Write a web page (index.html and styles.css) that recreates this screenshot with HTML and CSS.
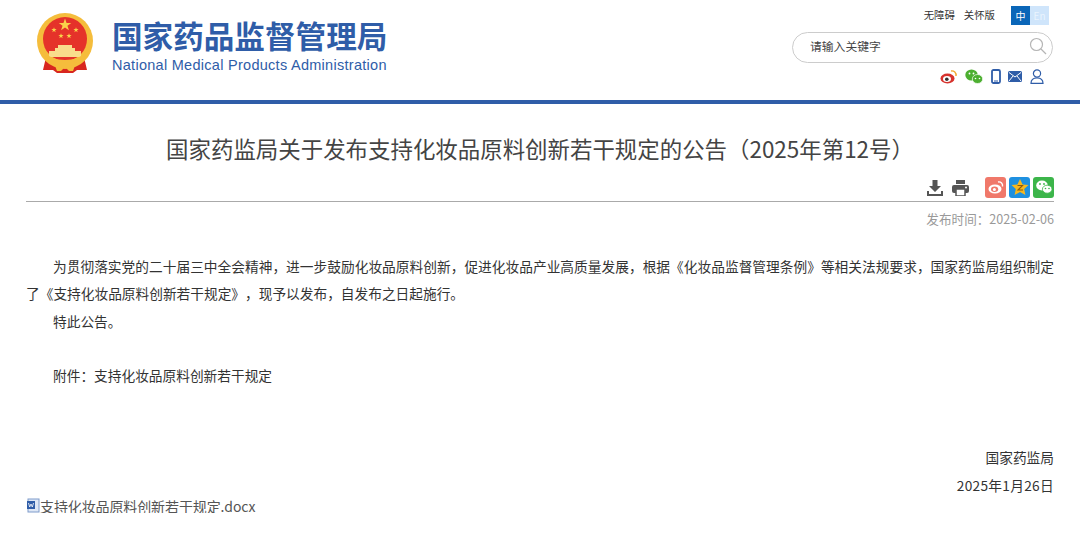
FILE: index.html
```html
<!DOCTYPE html>
<html lang="zh-CN">
<head>
  <meta charset="UTF-8" />
  <meta name="viewport" content="width=device-width, initial-scale=1.0"/>
  <title>国家药监局关于发布支持化妆品原料创新若干规定的公告（2025年第12号）</title>
  <link rel="stylesheet" href="styles.css">
</head>
<body>
  <header class="site-header">
    <div class="brand">
      <svg class="emblem" viewBox="0 0 56 60" width="56" height="60">
        <defs>
          <polygon id="star" points="0,-5 1.2,-1.6 4.8,-1.6 1.9,0.6 3,4 0,2 -3,4 -1.9,0.6 -4.8,-1.6 -1.2,-1.6"/>
        </defs>
        <path d="M10 40 L6 57 L16 57 L20 60 L36 60 L40 57 L50 57 L46 40 Z" fill="#d8261f"/>
        <circle cx="28" cy="28" r="28" fill="#f5bd3c"/>
        <circle cx="28" cy="26" r="22" fill="#e5322a"/>
        <use href="#star" transform="translate(28 12) scale(1.3)" fill="#f9d24a"/>
        <use href="#star" transform="translate(17 17) scale(.55)" fill="#f9d24a"/>
        <use href="#star" transform="translate(24 23) scale(.55)" fill="#f9d24a"/>
        <use href="#star" transform="translate(32 23) scale(.55)" fill="#f9d24a"/>
        <use href="#star" transform="translate(39 17) scale(.55)" fill="#f9d24a"/>
        <path d="M21 32 H35 V35 H38 V38 H44 V44 H12 V38 H18 V35 H21 Z" fill="#f9dc8c"/>
        <path d="M7 38 C14 50 42 50 49 38 L47 46 C40 53 16 53 9 46 Z" fill="#f5bd3c"/>
        <path d="M17 50 C22 46 34 46 39 50 L36 58 H32 L28 54 L24 58 H20 Z" fill="#f5bd3c"/>
      </svg>
      <div class="brand-text">
        <div class="brand-cn">国家药品监督管理局</div>
        <div class="brand-en">National Medical Products Administration</div>
      </div>
    </div>
    <div class="header-tools">
      <div class="top-links">
        <a>无障碍</a>
        <a>关怀版</a>
        <div class="lang">
          <span class="lang-cn">中</span><span class="lang-en">En</span>
        </div>
      </div>
      <div class="search">
        <span>请输入关键字</span>
        <svg viewBox="0 0 18 18" width="18" height="18" fill="none" stroke="#b5b5b5" stroke-width="1.2">
          <circle cx="7.5" cy="7.5" r="6"/><path d="M12 12 L17 17"/>
        </svg>
      </div>
      <div class="follow">
        <svg class="ico-weibo" viewBox="0 0 18 15" width="18" height="15">
          <ellipse cx="7.5" cy="9.5" rx="7" ry="5" fill="#d7322d"/>
          <ellipse cx="7" cy="10" rx="4" ry="3" fill="#fff"/>
          <circle cx="6.8" cy="10.2" r="1.8" fill="#333"/>
          <path d="M11 2 C14 1.5 16.5 3.5 16 7" fill="none" stroke="#f2a72e" stroke-width="1.4"/>
        </svg>
        <svg class="ico-wechat" viewBox="0 0 18 15" width="18" height="15">
          <ellipse cx="6.5" cy="6" rx="6.2" ry="5.5" fill="#4caf30"/>
          <ellipse cx="12.5" cy="10" rx="5.2" ry="4.5" fill="#4caf30" stroke="#fff" stroke-width=".7"/>
          <circle cx="4.5" cy="4.5" r=".9" fill="#fff"/>
          <circle cx="8.5" cy="4.5" r=".9" fill="#fff"/>
          <circle cx="10.5" cy="9.5" r=".8" fill="#fff"/>
          <circle cx="14.5" cy="9.5" r=".8" fill="#fff"/>
        </svg>
        <svg class="ico-phone" viewBox="0 0 10 15" width="10" height="15">
          <rect x="1" y="1" width="8" height="13" rx="1.5" fill="#fff" stroke="#2f5da8" stroke-width="1.8"/>
          <path d="M3 12 H7" stroke="#2f5da8"/>
        </svg>
        <svg class="ico-mail" viewBox="0 0 14 11" width="14" height="11">
          <rect width="14" height="11" rx="1.5" fill="#2f5da8"/>
          <path d="M1 1.5 L7 6 L13 1.5 M1 10 L5 5 M13 10 L9 5" fill="none" stroke="#fff"/>
        </svg>
        <svg class="ico-user" viewBox="0 0 14 15" width="14" height="15" fill="none" stroke="#2f5da8" stroke-width="1.2">
          <circle cx="7" cy="4.5" r="3.6"/>
          <path d="M1 14.3 C1 10.5 3.5 9 7 9 C10.5 9 13 10.5 13 14.3 Z"/>
        </svg>
      </div>
    </div>
  </header>

  <main class="article">
    <h1>国家药监局关于发布支持化妆品原料创新若干规定的公告（2025年第12号）</h1>

    <div class="toolbar">
      <svg class="tool-down" viewBox="0 0 16 16" width="16" height="16" fill="#555">
        <path d="M5.5 0 H10.5 V6 H14 L8 12 L2 6 H5.5 Z"/>
        <path d="M0 11 H2 V14 H14 V11 H16 V16 H0 Z"/>
      </svg>
      <svg class="tool-print" viewBox="0 0 17 16" width="17" height="16">
        <path d="M4 0 H13 V4 H4 Z" fill="#555"/>
        <rect y="5" width="17" height="8" rx="2" fill="#555"/>
        <rect x="4" y="9" width="9" height="7" fill="#fff" stroke="#555" stroke-width="1.5"/>
        <circle cx="14" cy="7.5" r="1" fill="#fff"/>
      </svg>
      <div class="share">
        <span class="share-btn share-weibo">
          <svg viewBox="0 0 20 20" width="20" height="20">
            <ellipse cx="9" cy="12" rx="6.5" ry="4.6" fill="#fff"/>
            <ellipse cx="8.6" cy="12.3" rx="3.6" ry="2.7" fill="#f0786a"/>
            <circle cx="8.4" cy="12.4" r="1.5" fill="#fff"/>
            <path d="M12 5 C15 4.5 17 6.5 16.5 9.5" fill="none" stroke="#fff" stroke-width="1.4"/>
          </svg>
        </span>
        <span class="share-btn share-qzone">
          <svg viewBox="0 0 20 20" width="20" height="20">
            <polygon points="10,2 12.6,7.4 18.5,8 14.2,12 15.4,18 10,15 4.6,18 5.8,12 1.5,8 7.4,7.4" fill="#f6b81f"/>
            <path d="M7.5 8.5 H12.5 L8 13 H13" fill="none" stroke="#8a5a10" stroke-width="1.1"/>
          </svg>
        </span>
        <span class="share-btn share-wechat">
          <svg viewBox="0 0 20 20" width="20" height="20">
            <ellipse cx="8" cy="8.5" rx="5.8" ry="5" fill="#fff"/>
            <ellipse cx="13.2" cy="12.2" rx="4.8" ry="4" fill="#fff" stroke="#3cb54a" stroke-width=".8"/>
            <circle cx="6" cy="7" r=".9" fill="#3cb54a"/>
            <circle cx="10" cy="7" r=".9" fill="#3cb54a"/>
            <circle cx="11.5" cy="11.5" r=".8" fill="#3cb54a"/>
            <circle cx="15" cy="11.5" r=".8" fill="#3cb54a"/>
          </svg>
        </span>
      </div>
    </div>

    <div class="publish-date">发布时间：2025-02-06</div>

    <div class="content">
      <p class="indent">为贯彻落实党的二十届三中全会精神，进一步鼓励化妆品原料创新，促进化妆品产业高质量发展，根据《化妆品监督管理条例》等相关法规要求，国家药监局组织制定了《支持化妆品原料创新若干规定》，现予以发布，自发布之日起施行。</p>
      <p class="indent">特此公告。</p>
      <p class="blank">&nbsp;</p>
      <p class="indent">附件：支持化妆品原料创新若干规定</p>
      <p class="blank">&nbsp;</p>
      <p class="blank">&nbsp;</p>
      <p class="sign">国家药监局</p>
      <p class="sign sign-date">2025年1月26日</p>
    </div>

    <div class="attachment">
      <svg viewBox="0 0 14 15" width="14" height="15">
        <rect x="2" y="1" width="11" height="13" fill="#dfe8f6" stroke="#7f9ccb"/>
        <rect x="1" y="3" width="8" height="8" fill="#2f5da8"/>
        <path d="M2.5 5 L3.7 9 L5 6 L6.3 9 L7.5 5" fill="none" stroke="#fff" stroke-width=".8"/>
      </svg>
      <a>支持化妆品原料创新若干规定.docx</a>
    </div>
  </main>
</body>
</html>
```

FILE: styles.css
```css
body {
  margin: 0;
  background: #fff;
  color: #333;
  font-family: "Noto Sans CJK SC", "Noto Sans", sans-serif;
  overflow: hidden;
}

.site-header {
  display: flex;
  justify-content: space-between;
  height: 100px;
  padding: 0 27px 0 37px;
  border-bottom: 4px solid #2f5da8;
}

.brand {
  display: flex;
  gap: 19px;
  padding-top: 13px;
}

.emblem {
  display: block;
}

.brand-cn {
  margin-top: 4px;
  font-size: 30.6px;
  line-height: 36px;
  font-weight: 700;
  color: #2f5da8;
  white-space: nowrap;
}

.brand-en {
  margin-top: 3px;
  font-family: "Liberation Sans", sans-serif;
  font-size: 14.5px;
  line-height: 18px;
  letter-spacing: 0.28px;
  color: #2f5da8;
  white-space: nowrap;
}

.header-tools {
  display: flex;
  flex-direction: column;
  align-items: flex-end;
  width: 261px;
}

.top-links {
  display: flex;
  align-items: center;
  height: 19px;
  margin-top: 6px;
  font-size: 10.4px;
  line-height: 17px;
  color: #333;
}

.top-links a {
  margin-right: 9px;
  padding-bottom: 2px;
}

.lang {
  display: flex;
  margin-left: 7px;
  margin-right: 4px;
  font-size: 10px;
  line-height: 19px;
  text-align: center;
}

.lang-cn {
  width: 19px;
  background: #0a66b8;
  color: #fff;
}

.lang-en {
  width: 19px;
  background: #cfe5fb;
  color: #eaf4fe;
}

.search {
  display: flex;
  align-items: center;
  justify-content: space-between;
  box-sizing: border-box;
  width: 261px;
  height: 31px;
  margin-top: 7px;
  padding: 0 5px 3px 17px;
  border: 1px solid #ccc;
  border-radius: 16px;
  font-size: 11.8px;
  color: #444;
}

.search span {
  margin-bottom: 2px;
}

.follow {
  display: flex;
  align-items: center;
  margin-top: 6px;
  margin-right: 9px;
}

.ico-wechat {
  margin-left: 7px;
}

.ico-phone {
  margin-left: 8px;
}

.ico-mail {
  margin-left: 7px;
}

.ico-user {
  margin-left: 8px;
}

.article {
  padding: 0 26px;
}

h1 {
  margin: 28px 0 0;
  font-size: 22.45px;
  line-height: 32px;
  font-weight: 400;
  text-align: center;
  color: #444;
}

.toolbar {
  display: flex;
  align-items: center;
  justify-content: flex-end;
  height: 23px;
  margin-top: 12px;
  border-bottom: 1px solid #aaa;
  padding-bottom: 2px;
}

.tool-down {
  margin-right: 1px;
}

.tool-print {
  margin-left: 8px;
}

.share {
  display: flex;
  gap: 3px;
  margin-left: 16px;
}

.share-btn {
  display: block;
  width: 21px;
  height: 21px;
  border-radius: 3px;
  text-align: center;
}

.share-weibo {
  background: #f0786a;
}

.share-qzone {
  background: #1e90e0;
}

.share-wechat {
  background: #3cb54a;
}

.publish-date {
  margin-top: 8px;
  font-size: 12.6px;
  line-height: 18px;
  text-align: right;
  color: #999;
}

.content {
  margin-top: 25px;
  font-size: 13.7px;
  line-height: 27.35px;
  color: #333;
  text-spacing-trim: space-all;
}

.content p {
  margin: 0;
}

.indent {
  text-indent: 27px;
  text-align: justify;
}

.sign {
  text-align: right;
}

.sign-date {
  letter-spacing: 0.3px;
}

.attachment {
  display: flex;
  align-items: center;
  margin-top: -1px;
  font-size: 14px;
  line-height: 14px;
  letter-spacing: -0.11px;
  color: #555;
}
```
